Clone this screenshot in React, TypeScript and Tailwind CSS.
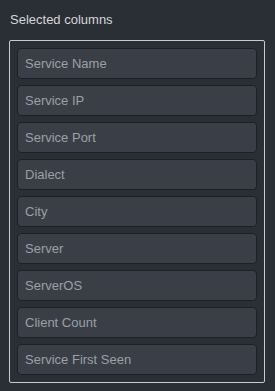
import React from 'react';

const columns = [
  'Service Name',
  'Service IP',
  'Service Port',
  'Dialect',
  'City',
  'Server',
  'ServerOS',
  'Client Count',
  'Service First Seen',
];

export default function App() {
  return (
    <div
      className="w-[275px] h-[391px] bg-[#2a2e35] pl-[9px] pr-[10px] pt-[12px]"
      style={{ fontFamily: '"Liberation Sans", Arial, sans-serif' }}
    >
      {/* Title */}
      <div className="pl-[1px] text-[13px] leading-[16px] text-[#d5d7da] h-[28px]">Selected columns</div>

      {/* Column list */}
      <div className="border border-[#c9cacc] rounded-[2px] p-[7px] flex flex-col gap-[6px]">
        {columns.map((c) => (
          <div
            key={c}
            className="h-[31px] flex items-center px-[7px] bg-[#3a3f47] border border-[#1d2025] rounded-[4px] text-[13px] text-[#9b9fa6]"
          >
            {c}
          </div>
        ))}
      </div>
    </div>
  );
}
